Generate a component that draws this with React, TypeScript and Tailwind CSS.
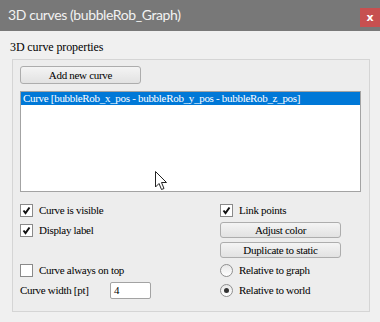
import React from 'react';

const CheckBox = ({ checked }: { checked: boolean }) => (
  <div className="w-[13px] h-[13px] bg-white border border-[#8a8a8a] flex items-center justify-center shrink-0">
    {checked && (
      <svg width="9" height="9" viewBox="0 0 9 9">
        <path d="M1.5 4.5 L3.5 7 L7.5 1.5" fill="none" stroke="#111" strokeWidth="2" />
      </svg>
    )}
  </div>
);

const Radio = ({ checked }: { checked: boolean }) => (
  <div className="w-[13px] h-[13px] rounded-full bg-gradient-to-b from-[#e8e8e8] to-white border border-[#8f8f8f] flex items-center justify-center shrink-0">
    {checked && <div className="w-[5px] h-[5px] rounded-full bg-[#333]" />}
  </div>
);

const Button = ({ label, className }: { label: string; className: string }) => (
  <div
    className={`border border-[#adadad] rounded-[3px] bg-gradient-to-b from-[#f4f4f4] to-[#e2e2e2] flex items-center justify-center text-black ${className}`}
  >
    {label}
  </div>
);

export default function App() {
  return (
    <div className="w-[380px] h-[322px] bg-[#f0f0f0] flex flex-col overflow-hidden font-['Liberation_Serif',serif]">
      {/* Title bar */}
      <div className="h-[31px] bg-[#787878] flex justify-between shrink-0">
        <span className="pl-[8px] pt-[5px] text-[14px] tracking-[-0.4px] text-[#f2f2f2] leading-[20px] font-['Lato',sans-serif]">
          3D curves (bubbleRob_Graph)
        </span>
        <div className="mt-[8px] w-[20px] h-[19px] bg-[#c75050] flex items-center justify-center text-white text-[11px] font-bold leading-none font-['DejaVu_Sans',sans-serif]">
          x
        </div>
      </div>

      {/* Body */}
      <div className="pl-[10px] pt-[9px] text-[12px] leading-[14px] text-black tracking-[-0.1px]">3D curve properties</div>

      <div className="ml-[12px] mt-[5px] w-[358px] h-[253px] border border-[#d5d5d5] bg-[#ededed] pl-[7px] pt-[6px] text-[11px] tracking-[-0.3px] text-black">
        <Button label="Add new curve" className="w-[121px] h-[18px]" />

        {/* List */}
        <div className="relative mt-[7px] w-[341px] h-[101px] bg-white border border-[#a3a3a3]">
          <div className="h-[13px] bg-[#0078d7] text-white pl-[2px] leading-[13px] whitespace-nowrap">
            Curve [bubbleRob_x_pos - bubbleRob_y_pos - bubbleRob_z_pos]
          </div>
          <svg className="absolute left-[134px] top-[79px]" width="13" height="20" viewBox="0 0 13 20">
            <path d="M0.5 0.5 L0.5 16 L4 12.5 L6.5 18.5 L9 17.5 L6.5 11.5 L11.5 11.5 Z" fill="white" stroke="#222" strokeWidth="1" />
          </svg>
        </div>

        {/* Options */}
        <div className="mt-[8px] grid grid-cols-[200px_1fr] grid-rows-[repeat(5,20px)]">
          <div className="flex items-center gap-[6px]">
            <CheckBox checked />
            <span>Curve is visible</span>
          </div>
          <div className="flex items-center gap-[6px]">
            <CheckBox checked />
            <span>Link points</span>
          </div>

          <div className="flex items-center gap-[6px]">
            <CheckBox checked />
            <span>Display label</span>
          </div>
          <div className="flex items-center">
            <Button label="Adjust color" className="w-[121px] h-[16px]" />
          </div>

          <div />
          <div className="flex items-center">
            <Button label="Duplicate to static" className="w-[121px] h-[16px]" />
          </div>

          <div className="flex items-center gap-[6px]">
            <CheckBox checked={false} />
            <span>Curve always on top</span>
          </div>
          <div className="flex items-center gap-[6px]">
            <Radio checked={false} />
            <span>Relative to graph</span>
          </div>

          <div className="flex items-center">
            <span className="w-[90px]">Curve width [pt]</span>
            <div className="w-[41px] h-[17px] bg-white border border-[#a3a3a3] rounded-[2px] pl-[3px] leading-[15px]">4</div>
          </div>
          <div className="flex items-center gap-[6px]">
            <Radio checked />
            <span>Relative to world</span>
          </div>
        </div>
      </div>
    </div>
  );
}
